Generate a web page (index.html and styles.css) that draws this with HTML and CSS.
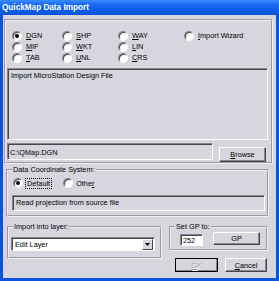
FILE: index.html
```html
<!DOCTYPE html>
<html lang="en">
<head>
    <meta charset="UTF-8">
    <title>QuickMap Data Import</title>
    <link rel="stylesheet" href="styles.css">
</head>
<body>
    <div class="window">
        <div class="titlebar">QuickMap Data Import</div>
        <div class="client">
            <div class="panel">
                <!-- Source format -->
                <div class="formats">
                    <div class="radio"><span class="dot checked"></span><span><u>D</u>GN</span></div>
                    <div class="radio"><span class="dot"></span><span><u>S</u>HP</span></div>
                    <div class="radio"><span class="dot"></span><span><u>W</u>AY</span></div>
                    <div class="radio"><span class="dot"></span><span><u>I</u>mport Wizard</span></div>
                    <div class="radio"><span class="dot"></span><span><u>M</u>IF</span></div>
                    <div class="radio"><span class="dot"></span><span><u>W</u>KT</span></div>
                    <div class="radio"><span class="dot"></span><span><u>L</u>IN</span></div>
                    <div></div>
                    <div class="radio"><span class="dot"></span><span><u>T</u>AB</span></div>
                    <div class="radio"><span class="dot"></span><span><u>U</u>NL</span></div>
                    <div class="radio"><span class="dot"></span><span><u>C</u>RS</span></div>
                </div>

                <div class="field info">Import MicroStation Design File</div>

                <div class="path-row">
                    <div class="field path">C:\QMap.DGN</div>
                    <div class="button browse"><u>B</u>rowse</div>
                </div>
            </div>

            <!-- Data Coordinate System -->
            <fieldset class="group coords">
                <legend>Data Coordinate System:</legend>
                <div class="coord-row">
                    <div class="radio"><span class="dot checked"></span><span class="focus">Default</span></div>
                    <div class="radio other"><span class="dot"></span><span>Othe<u>r</u></span></div>
                </div>
                <div class="field proj">Read projection from source file</div>
            </fieldset>

            <div class="bottom-row">
                <fieldset class="group layer">
                    <legend>Import into layer:</legend>
                    <div class="combo">
                        <span class="combo-text">Edit Layer</span>
                        <span class="combo-arrow"><svg width="5" height="3" viewBox="0 0 5 3"><path d="M0 0h5L2.5 3z" fill="#000"/></svg></span>
                    </div>
                </fieldset>
                <div class="right-col">
                    <fieldset class="group gp">
                        <legend>Set GP to:</legend>
                        <div class="gp-row">
                            <div class="edit">252</div>
                            <div class="button gp-btn">GP</div>
                        </div>
                    </fieldset>
                    <div class="actions">
                        <div class="button ok disabled"><u>O</u>K</div>
                        <div class="button cancel"><u>C</u>ancel</div>
                    </div>
                </div>
            </div>
        </div>
    </div>
</body>
</html>
```

FILE: styles.css
```css
body {
    margin: 0;
    font-family: 'Liberation Sans', Arial, sans-serif;
    font-size: 7.3px;
    line-height: 9px;
    color: #000;
}

.window {
    width: 279px;
    height: 281px;
    background: #0b54e0;
    display: flex;
    flex-direction: column;
}

.titlebar {
    height: 15px;
    line-height: 15px;
    padding-left: 2px;
    color: #fff;
    font-weight: bold;
    font-size: 8.2px;
    background: linear-gradient(180deg, #3b8cff 0%, #1a6af4 30%, #0c5ce8 70%, #0a52d8 100%);
}

.client {
    margin: 0 3px 3px 3px;
    height: 263px;
    padding-top: 4px;
    box-sizing: border-box;
    background: #d7d6df;
}

u {
    text-decoration: underline;
    text-underline-offset: 1px;
}

/* top frame with format radios and source file */
.panel {
    margin: 0 3px 0 1px;
    height: 145px;
    box-sizing: border-box;
    border: 2px groove #eeeef4;
}

.formats {
    margin-top: 9px;
    padding-left: 6px;
    display: grid;
    grid-template-columns: 50px 56px 66px auto;
    grid-auto-rows: 11px;
}

.radio {
    display: flex;
    align-items: center;
    gap: 4px;
    white-space: nowrap;
}

.dot {
    width: 10px;
    height: 10px;
    box-sizing: border-box;
    border-radius: 50%;
    background: #fff;
    border: 1px solid;
    border-color: #85858d #fff #fff #85858d;
    box-shadow: inset 1px 1px 0 #45454c;
    display: flex;
    align-items: center;
    justify-content: center;
    flex: none;
}

.dot.checked::after {
    content: "";
    width: 4px;
    height: 4px;
    border-radius: 50%;
    background: #000;
}

/* sunken boxes */
.field {
    box-sizing: border-box;
    border: 1px solid;
    border-color: #85858d #fff #fff #85858d;
    box-shadow: inset 1px 1px 0 #45454c;
    padding: 2px 3px;
    white-space: nowrap;
}

.info {
    margin: 5px 0 0 1px;
    width: 261px;
    height: 72px;
}

.path-row {
    display: flex;
    margin-top: 3px;
}

.path {
    margin-left: 1px;
    width: 206px;
    height: 17px;
    padding: 4px 2px;
}

/* buttons */
.button {
    box-sizing: border-box;
    background: #d7d6df;
    border: 1px solid;
    border-color: #fff #45454c #45454c #fff;
    box-shadow: inset -1px -1px 0 #85858d;
    text-align: center;
    display: flex;
    align-items: center;
    justify-content: center;
}

.browse {
    margin: 4px 0 0 6px;
    width: 47px;
    height: 15px;
}

/* group boxes */
.group {
    margin: 0;
    padding: 0;
    border: 2px groove #eeeef4;
    box-sizing: border-box;
    min-width: 0;
}

.group legend {
    margin-left: 4px;
    padding: 0 1px;
    line-height: 9px;
}

.coords {
    margin: 1px 0 0 3px;
    width: 263px;
    padding-bottom: 4px;
}

.coord-row {
    display: flex;
    margin: 4px 0 0 5px;
    height: 10px;
}

.coord-row .radio {
    gap: 3px;
}

.focus {
    outline: 1px dotted #000;
    outline-offset: 0;
    padding: 0 1px;
}

.other {
    margin-left: 12px;
}

.proj {
    margin: 7px 0 0 4px;
    width: 253px;
    height: 16px;
}

.bottom-row {
    display: flex;
    margin-top: 5px;
}

.layer {
    margin-left: 4px;
    width: 155px;
    height: 37px;
}

.combo {
    margin: 6px 0 0 2px;
    width: 144px;
    height: 14px;
    box-sizing: border-box;
    background: #fff;
    border: 1px solid;
    border-color: #85858d #fff #fff #85858d;
    box-shadow: inset 1px 1px 0 #45454c;
    display: flex;
    align-items: center;
    padding: 1px 1px 1px 3px;
}

.combo-text {
    flex: 1;
}

.combo-arrow {
    width: 11px;
    height: 11px;
    box-sizing: border-box;
    background: #d7d6df;
    border: 1px solid;
    border-color: #fff #45454c #45454c #fff;
    display: flex;
    align-items: center;
    justify-content: center;
}

.right-col {
    margin-left: 7px;
    display: flex;
    flex-direction: column;
}

.gp {
    width: 99px;
    height: 29px;
}

.gp-row {
    display: flex;
    align-items: flex-start;
}

.edit {
    margin: 3px 0 0 9px;
    width: 23px;
    height: 12px;
    box-sizing: border-box;
    background: #fff;
    border: 1px solid;
    border-color: #85858d #fff #fff #85858d;
    box-shadow: inset 1px 1px 0 #45454c;
    padding: 1px 2px;
}

.gp-btn {
    margin: 1px 0 0 10px;
    width: 47px;
    height: 13px;
}

.actions {
    display: flex;
    margin: 7px 0 0 6px;
}

.ok {
    width: 43px;
    height: 14px;
    outline: 1px solid #000;
    outline-offset: -1px;
}

.disabled {
    color: #a0a0a8;
    text-shadow: 1px 1px 0 #fff;
}

.cancel {
    margin-left: 7px;
    width: 42px;
    height: 14px;
}
```
